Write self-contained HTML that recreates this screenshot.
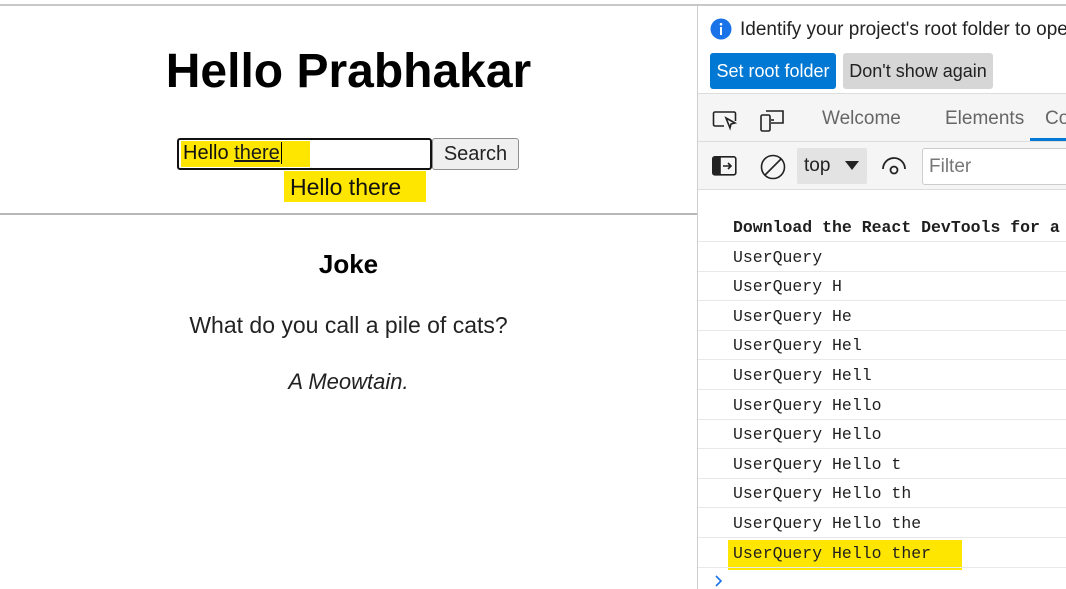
<!DOCTYPE html>
<html><head><style>
*{margin:0;padding:0;box-sizing:border-box}
body{width:1066px;height:589px;overflow:hidden;background:#fff;font-family:"Liberation Sans",sans-serif;position:relative}
.abs{position:absolute}
.mono{font-family:"Liberation Mono",monospace;font-size:16.5px;color:#1f1f1f}
.row{position:absolute;left:698px;width:368px;height:30px;border-bottom:1px solid #e8e8e8;padding-left:35px;line-height:32px;white-space:nowrap;overflow:hidden}
</style></head><body>
<div class="abs" style="left:0;top:4px;width:1066px;height:2px;background:#c8c8c8"></div>
<div class="abs" style="left:697px;top:6px;width:1px;height:583px;background:#cfcfcf"></div>
<div class="abs" style="left:0;top:44px;width:697px;text-align:center;font-size:48px;font-weight:bold;color:#000">Hello Prabhakar</div>
<div class="abs" style="left:177px;top:138px;width:255px;height:32px;border:2px solid #111;border-radius:3px;background:#fff"></div>
<div class="abs" style="left:181px;top:141px;width:129px;height:26px;background:#ffe600"></div>
<div class="abs" style="left:183px;top:142px;font-size:20px;color:#111">Hello <span style="text-decoration:underline;color:#1a1a1a">there</span><span style="border-left:1px solid #000;margin-left:1px"></span></div>
<div class="abs" style="left:432px;top:138px;width:87px;height:32px;border:1px solid #8f8f8f;border-radius:3px;background:#efefef;font-size:20px;text-align:center;line-height:30px;color:#222">Search</div>
<div class="abs" style="left:284px;top:171px;width:142px;height:31px;background:#ffe600;font-size:23px;line-height:33px;padding-left:6px;color:#111">Hello there</div>
<div class="abs" style="left:0;top:213px;width:697px;height:2px;background:#b8b8b8"></div>
<div class="abs" style="left:0;top:249px;width:697px;text-align:center;font-size:26px;font-weight:bold">Joke</div>
<div class="abs" style="left:0;top:312px;width:697px;text-align:center;font-size:23px;color:#222">What do you call a pile of cats?</div>
<div class="abs" style="left:0;top:369px;width:697px;text-align:center;font-size:22px;font-style:italic;color:#222">A Meowtain.</div>
<svg class="abs" style="left:710px;top:18px" width="22" height="22"><circle cx="11" cy="11" r="10.5" fill="#1a73e8"/><rect x="10" y="9" width="2" height="8" fill="#fff"/><circle cx="11" cy="6.2" r="1.3" fill="#fff"/></svg>
<div class="abs" style="left:740px;top:19px;font-size:19px;color:#222;white-space:nowrap">Identify your project's root folder to open</div>
<div class="abs" style="left:710px;top:53px;width:126px;height:36px;background:#0078d4;border-radius:3px;color:#fff;font-size:18px;line-height:36px;text-align:center;white-space:nowrap">Set root folder</div>
<div class="abs" style="left:843px;top:53px;width:150px;height:36px;background:#d6d6d6;border-radius:3px;color:#222;font-size:18px;line-height:36px;text-align:center;white-space:nowrap">Don't show again</div>
<div class="abs" style="left:698px;top:93px;width:368px;height:49px;background:#f5f5f5;border-top:1px solid #ddd;border-bottom:1px solid #ddd"></div>
<svg class="abs" style="left:712px;top:109px" width="28" height="24" fill="none" stroke="#222" stroke-width="1.6"><path d="M12 17H3a1.5 1.5 0 0 1-1.5-1.5v-11A1.5 1.5 0 0 1 3 3h19a1.5 1.5 0 0 1 1.5 1.5V12"/><path d="M14 9l9 5-4 1-1 4z"/></svg>
<svg class="abs" style="left:760px;top:108px" width="28" height="26" fill="none" stroke="#222" stroke-width="1.6"><rect x="1" y="7" width="9" height="16" rx="1.5"/><path d="M6 3h17v12H11"/><path d="M11 12h3"/></svg>
<div class="abs" style="left:822px;top:108px;font-size:19px;color:#666">Welcome</div>
<div class="abs" style="left:945px;top:108px;font-size:19px;color:#666">Elements</div>
<div class="abs" style="left:1045px;top:108px;font-size:19px;color:#666">Co</div>
<div class="abs" style="left:1030px;top:138px;width:36px;height:3px;background:#0078d4"></div>
<div class="abs" style="left:698px;top:142px;width:368px;height:48px;background:#f5f5f5;border-bottom:1px solid #ddd"></div>
<svg class="abs" style="left:712px;top:156px" width="26" height="20"><rect x="0.8" y="0.8" width="23" height="18" rx="2" fill="none" stroke="#222" stroke-width="1.6"/><rect x="0.8" y="0.8" width="8" height="18" fill="#222"/><path d="M11 10h8M16 7l3 3-3 3" stroke="#222" stroke-width="1.6" fill="none"/></svg>
<svg class="abs" style="left:760px;top:154px" width="26" height="26" fill="none" stroke="#222" stroke-width="1.6"><circle cx="13" cy="13" r="11.5"/><path d="M5 21L21 5"/></svg>
<div class="abs" style="left:797px;top:148px;width:70px;height:36px;background:#e3e3e3;border-radius:2px;font-size:19px;line-height:36px;padding-left:7px;color:#222">top</div>
<svg class="abs" style="left:845px;top:161px" width="14" height="10"><path d="M0 0h14L7 9z" fill="#222"/></svg>
<svg class="abs" style="left:881px;top:156px" width="26" height="20" fill="none" stroke="#222" stroke-width="1.8"><path d="M2 13a11 11 0 0 1 22 0"/><circle cx="13" cy="14" r="3.5"/></svg>
<div class="abs" style="left:922px;top:148px;width:150px;height:37px;background:#fff;border:1px solid #ccc;border-radius:3px;font-size:19px;line-height:35px;padding-left:6px;color:#777">Filter</div>
<div class="row mono" style="top:212px;font-weight:bold">Download the React DevTools for a better</div>
<div class="row mono" style="top:242px">UserQuery</div>
<div class="row mono" style="top:271px">UserQuery H</div>
<div class="row mono" style="top:301px">UserQuery He</div>
<div class="row mono" style="top:330px">UserQuery Hel</div>
<div class="row mono" style="top:360px">UserQuery Hell</div>
<div class="row mono" style="top:390px">UserQuery Hello</div>
<div class="row mono" style="top:419px">UserQuery Hello</div>
<div class="row mono" style="top:449px">UserQuery Hello t</div>
<div class="row mono" style="top:478px">UserQuery Hello th</div>
<div class="row mono" style="top:508px">UserQuery Hello the</div>
<div class="abs" style="left:728px;top:540px;width:234px;height:30px;background:#ffe600"></div>
<div class="row mono" style="top:538px;background:transparent">UserQuery Hello ther</div>
<svg class="abs" style="left:714px;top:574px" width="10" height="14" fill="none" stroke="#1a73e8" stroke-width="1.6"><path d="M2 2l5 5-5 5"/></svg>
</body></html>
